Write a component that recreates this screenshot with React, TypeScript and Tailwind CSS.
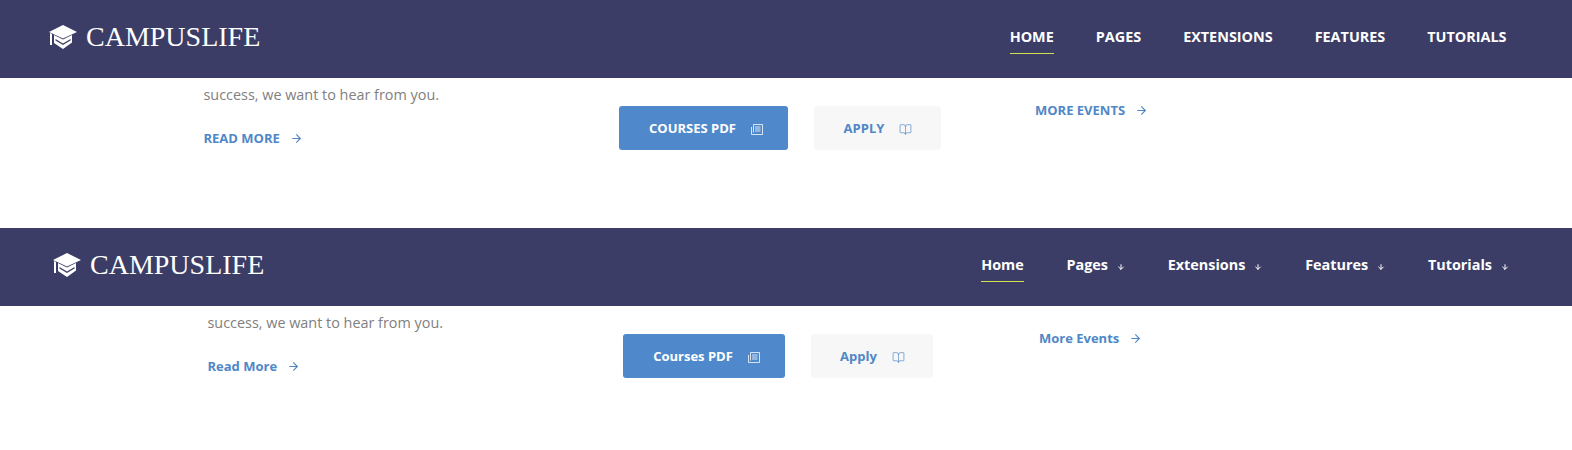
import { ArrowRight, ArrowDown, BookOpen } from "lucide-react";

const font = "font-['Open_Sans',sans-serif]";

const CapIcon = () => (
  <svg width="28" height="24" viewBox="0 0 28 24" fill="white" className="shrink-0">
    <path d="M14 0 L28 7 L14 13.5 L0 7 Z" />
    <path d="M1 8 L3 9 V20 H1 Z" />
    <path d="M5 10 L14 14.5 L23 10 V17.5 L14 24 L5 18 Z M6.5 14 V15.5 L14 20 L21.5 15.5 V14 L14 18.5 Z" fillRule="evenodd" />
  </svg>
);

const PdfIcon = () => (
  <svg width="12" height="11" viewBox="0 0 12 11" fill="none" stroke="white" strokeWidth="0.9" strokeOpacity="0.85" className="shrink-0">
    <path d="M2.5 0.5 H11.5 V10.5 H0.5 V3" />
    <path d="M4 3 H9.5 M4 5 H9.5 M4 7 H9.5 M2.5 0.5 V8.5" />
  </svg>
);

type NavItem = { label: string; active?: boolean };

const NavLink = ({ label, active, caret }: NavItem & { caret: boolean }) => (
  <div className="flex items-center">
    <div className={`relative text-[14.4px] font-bold leading-[20px] text-white ${font}`}>
      {label}
      {active && <span className="absolute -bottom-[7px] left-0 h-px w-full bg-[#d2e24a]" />}
    </div>
    {caret && !active && <ArrowDown size={8} strokeWidth={3} className="ml-[9px] mt-[3px] text-white" />}
  </div>
);

const MoreLink = ({ label, gap }: { label: string; gap: string }) => (
  <div className={`flex items-center text-[13px] font-bold leading-5 text-[#5087c7] ${font} ${gap}`}>
    {label}
    <ArrowRight size={13} strokeWidth={2} />
  </div>
);

type SectionProps = {
  upper: boolean;
  nav: string[];
  pageClass: string;
  navClass: string;
  navGap: string;
  readMore: string;
  moreEvents: string;
  courses: string;
  apply: string;
  coursesClass: string;
  applyClass: string;
  colTwoClass: string;
  linkGap: string;
};

const Section = (p: SectionProps) => (
  <section className={p.pageClass}>
    <header className={`flex h-[78px] items-center justify-between bg-[#3b3d66] pb-1 ${p.navClass}`}>
      <div className="flex items-center gap-[9px]">
        <CapIcon />
        <span className="font-['Liberation_Serif',serif] text-[28px] leading-none text-white">CAMPUSLIFE</span>
      </div>
      <nav className={`flex items-center ${p.navGap}`}>
        {p.nav.map((label, i) => (
          <NavLink key={label} label={label} active={i === 0} caret={!p.upper} />
        ))}
      </nav>
    </header>
    <div className={`flex ${p.colTwoClass}`}>
      <div className="w-[415.5px] shrink-0">
        <p className={`mt-[7px] text-[14.4px] leading-5 text-[#808080] ${font}`}>success, we want to hear from you.</p>
        <div className="mt-[23px]">
          <MoreLink label={p.readMore} gap={p.linkGap} />
        </div>
      </div>
      <div className="flex w-[416px] shrink-0 items-start gap-[26px] pt-7">
        <div className={`flex h-11 items-center justify-center rounded-[3px] bg-[#4f89cb] pt-[2px] text-[13px] font-bold text-white ${font} ${p.coursesClass}`}>
          {p.courses}
          <PdfIcon />
        </div>
        <div className={`flex h-11 items-center justify-center rounded-[3px] bg-[#f7f7f7] pt-[2px] text-[13px] font-bold text-[#5087c7] ${font} ${p.applyClass}`}>
          {p.apply}
          <BookOpen size={13} strokeWidth={1.25} />
        </div>
      </div>
      <div className="pt-[22px]">
        <MoreLink label={p.moreEvents} gap={p.linkGap} />
      </div>
    </div>
  </section>
);

const App = () => (
  <div className="h-[450px] w-[1572px] overflow-hidden bg-white">
    <Section
      upper
      nav={["HOME", "PAGES", "EXTENSIONS", "FEATURES", "TUTORIALS"]}
      pageClass="h-[228px]"
      navClass="pl-[49px] pr-[65.5px]"
      navGap="gap-[42px]"
      readMore="READ MORE"
      moreEvents="MORE EVENTS"
      courses="COURSES PDF"
      apply="APPLY"
      coursesClass="w-[169px] gap-[15px] pl-[5px]"
      applyClass="w-[127px] gap-[15px] pl-[1px]"
      colTwoClass="pl-[203.5px]"
      linkGap="gap-[10px]"
    />
    <Section
      upper={false}
      nav={["Home", "Pages", "Extensions", "Features", "Tutorials"]}
      pageClass="h-[222px]"
      navClass="pl-[53px] pr-[63px]"
      navGap="gap-[42.75px]"
      readMore="Read More"
      moreEvents="More Events"
      courses="Courses PDF"
      apply="Apply"
      coursesClass="w-[162px] gap-[15px] pl-[5px]"
      applyClass="w-[122px] gap-[15px] pl-[1px]"
      colTwoClass="pl-[207.5px]"
      linkGap="gap-[10px]"
    />
  </div>
);

export default App;
